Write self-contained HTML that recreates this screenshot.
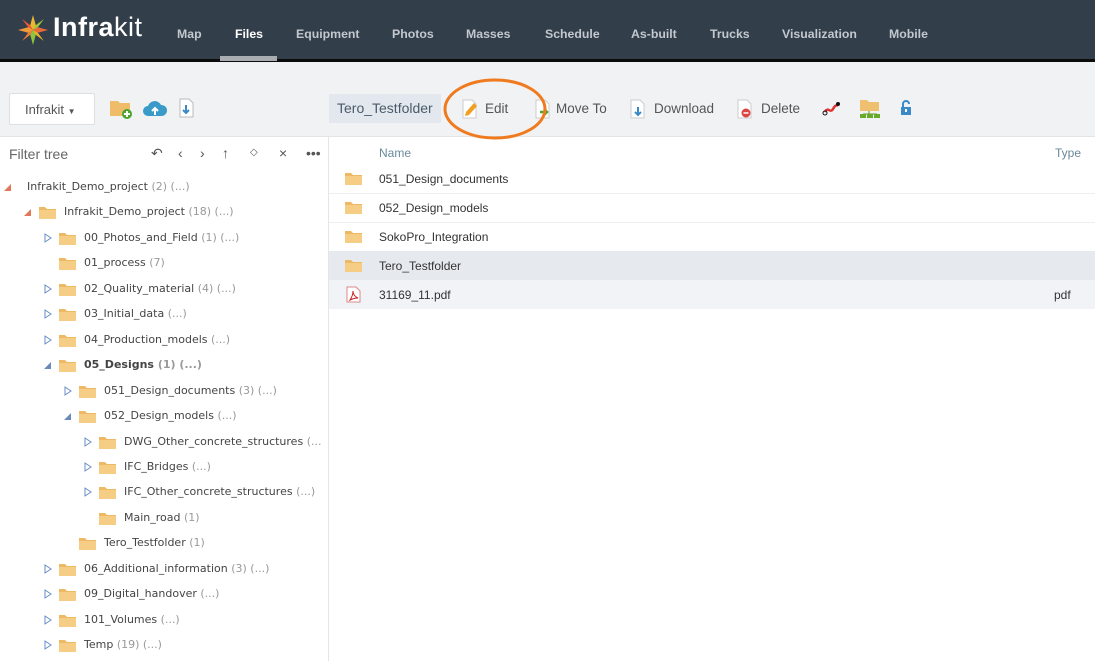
<!DOCTYPE html>
<html><head><meta charset="utf-8"><style>
*{margin:0;padding:0;box-sizing:border-box}
body{width:1095px;height:661px;overflow:hidden;background:#fff;font-family:"Liberation Sans",sans-serif;position:relative}
.hdr{position:absolute;left:0;top:0;width:1095px;height:59px;background:#323e4a}
.blk{position:absolute;left:0;top:59px;width:1095px;height:3px;background:#0c0c0c}
.nav{position:absolute;top:27px;color:#c3c8ce;font-weight:bold;font-size:12.3px}
.tb{position:absolute;left:0;top:62px;width:1095px;height:75px;background:#f1f2f4;border-bottom:1px solid #e2e4e7}
.a{position:absolute}
.tl{position:absolute;font-family:"DejaVu Sans",sans-serif;font-size:11px;color:#444;white-space:nowrap}
.tl span{color:#999}
.fl{position:absolute;font-size:12px;color:#333}
.tbt{position:absolute;font-size:13.5px;color:#555;top:101px}
</style></head><body>
<div class="hdr"></div><div class="blk"></div>
<div class="a" style="left:220px;top:56px;width:57px;height:5px;background:#a9adb2"></div>
<svg class="a" style="left:17px;top:14px" width="32" height="32" viewBox="0 0 32 32">
<polygon points="16,1 19,12 16,16 13,12" fill="#e8b830"/><polygon points="31,16 20,19 16,16 20,13" fill="#e86a3a"/>
<polygon points="16,31 13,20 16,16 19,20" fill="#8cc43c"/><polygon points="1,16 12,13 16,16 12,19" fill="#f29a3a"/>
<polygon points="5,5 13,11 16,16 11,13" fill="#e85a3a"/><polygon points="27,5 21,13 16,16 19,11" fill="#9cc83c"/>
<polygon points="27,27 19,21 16,16 21,19" fill="#e8b030"/><polygon points="5,27 11,19 16,16 13,21" fill="#e87a3a"/></svg>
<div class="a" style="left:53px;top:12px;color:#fff;font-size:27px;font-weight:bold;letter-spacing:0.5px">Infra<span style="font-weight:normal">kit</span></div>
<div class="nav" style="left:177px">Map</div>
<div class="nav" style="left:235px;color:#fff">Files</div>
<div class="nav" style="left:296px">Equipment</div>
<div class="nav" style="left:392px">Photos</div>
<div class="nav" style="left:466px">Masses</div>
<div class="nav" style="left:545px">Schedule</div>
<div class="nav" style="left:631px">As-built</div>
<div class="nav" style="left:710px">Trucks</div>
<div class="nav" style="left:782px">Visualization</div>
<div class="nav" style="left:889px">Mobile</div>
<div class="tb"></div>
<div class="a" style="left:9px;top:93px;width:86px;height:32px;background:#fff;border:1px solid #dcdfe3;border-radius:2px;font-size:13px;color:#555;padding:8px 0 0 15px">Infrakit <span style="font-size:8px">▼</span></div>
<svg class="a" style="left:109px;top:98px" width="24" height="22"><path d="M1 3h8l2 2h10v13H1z" fill="#efbd6a"/><circle cx="18" cy="16" r="5" fill="#4aa52e"/><path d="M18 13v6M15 16h6" stroke="#fff" stroke-width="2"/></svg>
<svg class="a" style="left:143px;top:99px" width="24" height="18"><path d="M5 17a5 5 0 0 1 0-10a7 7 0 0 1 13-1a5 5 0 0 1 1 11z" fill="#3a9ac8"/><path d="M12 16v-6M9 12l3-3 3 3" stroke="#fff" stroke-width="2" fill="none"/></svg>
<svg class="a" style="left:179px;top:98px" width="16" height="20"><path d="M1 1h9l4 4v14H1z" fill="#fff" stroke="#bbb"/><path d="M7 7v8M4 12l3 3 3-3" stroke="#3a8ac8" stroke-width="2" fill="none"/></svg>
<div class="a" style="left:329px;top:94px;width:112px;height:29px;background:#e3e8ee;font-size:14px;color:#4a5a6a;padding:6px 0 0 8px">Tero_Testfolder</div>
<svg class="a" style="left:462px;top:99px" width="16" height="20"><path d="M1 1h9l4 4v14H1z" fill="#fff" stroke="#ccc"/><path d="M3 17l1-4 8-9 3 3-8 9z" fill="#f0a020"/></svg>
<div class="tbt" style="left:485px">Edit</div>
<svg class="a" style="left:535px;top:99px" width="16" height="20"><path d="M1 1h9l4 4v14H1z" fill="#fff" stroke="#ccc"/><path d="M5 13h6M9 10l3 3-3 3" stroke="#4aa52e" stroke-width="2.5" fill="none"/></svg>
<div class="tbt" style="left:556px">Move To</div>
<svg class="a" style="left:630px;top:99px" width="16" height="20"><path d="M1 1h9l4 4v14H1z" fill="#fff" stroke="#ccc"/><path d="M8 8v8M5 13l3 3 3-3" stroke="#3a8ac8" stroke-width="2" fill="none"/></svg>
<div class="tbt" style="left:654px">Download</div>
<svg class="a" style="left:737px;top:99px" width="16" height="20"><path d="M1 1h9l4 4v14H1z" fill="#fff" stroke="#ccc"/><circle cx="9" cy="14" r="4.5" fill="#d44"/><path d="M6.5 14h5" stroke="#fff" stroke-width="1.5"/></svg>
<div class="tbt" style="left:761px">Delete</div>
<svg class="a" style="left:822px;top:100px" width="20" height="16"><path d="M3 12c3-6 5 2 8-3s3-3 5-4" stroke="#d33" stroke-width="2.5" fill="none"/><circle cx="3" cy="13" r="2" fill="none" stroke="#111"/><circle cx="16" cy="4" r="2" fill="#111"/></svg>
<svg class="a" style="left:859px;top:99px" width="22" height="20"><path d="M1 1h7l2 2h10v9H1z" fill="#efc070"/><path d="M10 12v3M4 15h14" stroke="#5a9a2a"/><rect x="1" y="15" width="6" height="4" fill="#6aaa2a"/><rect x="8" y="15" width="6" height="4" fill="#6aaa2a"/><rect x="15" y="15" width="6" height="4" fill="#6aaa2a"/></svg>
<svg class="a" style="left:900px;top:99px" width="12" height="17"><path d="M3 8V5a3 3 0 0 1 6 0" stroke="#3a8ac8" stroke-width="2" fill="none"/><rect x="1" y="8" width="10" height="8" fill="#3a8ac8"/><rect x="5" y="10" width="2" height="3" fill="#fff"/></svg>
<svg class="a" style="left:440px;top:76px" width="110" height="66"><ellipse cx="55" cy="33" rx="50" ry="29" fill="none" stroke="#f07a1e" stroke-width="3"/></svg>
<div class="a" style="left:328px;top:137px;width:1px;height:524px;background:#e3e5e8"></div>
<div class="a" style="left:9px;top:146px;font-size:14px;color:#666">Filter tree</div>
<div class="a" style="left:151px;top:145px;font-size:14px;color:#555;letter-spacing:0">
<span style="position:absolute;left:0">↶</span><span style="position:absolute;left:27px">‹</span><span style="position:absolute;left:49px">›</span><span style="position:absolute;left:71px">↑</span><span style="position:absolute;left:99px;font-size:10px;top:2px">◇</span><span style="position:absolute;left:128px">×</span><span style="position:absolute;left:155px">•••</span></div>
<svg width="0" height="0" style="position:absolute"><defs>
<symbol id="f" viewBox="0 0 17 13"><path d="M0 1h6l2 2h9v10H0z" fill="#edb964"/><path d="M0 4h17v9H0z" fill="#f6cd85"/></symbol>
<symbol id="o" viewBox="0 0 8 10"><path d="M1 1l6 4-6 4z" fill="none" stroke="#6a8ec8"/></symbol>
<symbol id="c" viewBox="0 0 8 8"><path d="M7 1v7H0z" fill="#6a8ab8"/></symbol>
<symbol id="r" viewBox="0 0 8 8"><path d="M7 1v7H0z" fill="#e0785a"/></symbol>
</defs></svg>
<svg class="a" style="left:4px;top:183px" width="8" height="8"><use href="#r"/></svg>
<div class="tl" style="left:27px;top:180px">Infrakit_Demo_project <span>(2) (...)</span></div>
<svg class="a" style="left:24px;top:208px" width="8" height="8"><use href="#r"/></svg>
<svg class="a" style="left:39px;top:206px" width="17" height="13"><use href="#f"/></svg>
<div class="tl" style="left:64px;top:205px">Infrakit_Demo_project <span>(18) (...)</span></div>

<svg class="a" style="left:44px;top:233px" width="8" height="10"><use href="#o"/></svg>
<svg class="a" style="left:59px;top:232px" width="17" height="13"><use href="#f"/></svg>
<div class="tl" style="left:84px;top:231px">00_Photos_and_Field <span>(1) (...)</span></div>
<svg class="a" style="left:59px;top:257px" width="17" height="13"><use href="#f"/></svg>
<div class="tl" style="left:84px;top:256px">01_process <span>(7)</span></div>
<svg class="a" style="left:44px;top:284px" width="8" height="10"><use href="#o"/></svg>
<svg class="a" style="left:59px;top:283px" width="17" height="13"><use href="#f"/></svg>
<div class="tl" style="left:84px;top:282px">02_Quality_material <span>(4) (...)</span></div>
<svg class="a" style="left:44px;top:309px" width="8" height="10"><use href="#o"/></svg>
<svg class="a" style="left:59px;top:308px" width="17" height="13"><use href="#f"/></svg>
<div class="tl" style="left:84px;top:307px">03_Initial_data <span>(...)</span></div>
<svg class="a" style="left:44px;top:335px" width="8" height="10"><use href="#o"/></svg>
<svg class="a" style="left:59px;top:334px" width="17" height="13"><use href="#f"/></svg>
<div class="tl" style="left:84px;top:333px">04_Production_models <span>(...)</span></div>
<svg class="a" style="left:44px;top:361px" width="8" height="8"><use href="#c"/></svg>
<svg class="a" style="left:59px;top:359px" width="17" height="13"><use href="#f"/></svg>
<div class="tl" style="left:84px;top:358px;font-weight:bold">05_Designs <span>(1) (...)</span></div>

<svg class="a" style="left:64px;top:386px" width="8" height="10"><use href="#o"/></svg>
<svg class="a" style="left:79px;top:385px" width="17" height="13"><use href="#f"/></svg>
<div class="tl" style="left:104px;top:384px">051_Design_documents <span>(3) (...)</span></div>
<svg class="a" style="left:64px;top:412px" width="8" height="8"><use href="#c"/></svg>
<svg class="a" style="left:79px;top:410px" width="17" height="13"><use href="#f"/></svg>
<div class="tl" style="left:104px;top:409px">052_Design_models <span>(...)</span></div>

<svg class="a" style="left:84px;top:437px" width="8" height="10"><use href="#o"/></svg>
<svg class="a" style="left:99px;top:436px" width="17" height="13"><use href="#f"/></svg>
<div class="tl" style="left:124px;top:435px">DWG_Other_concrete_structures <span>(...</span></div>
<svg class="a" style="left:84px;top:462px" width="8" height="10"><use href="#o"/></svg>
<svg class="a" style="left:99px;top:461px" width="17" height="13"><use href="#f"/></svg>
<div class="tl" style="left:124px;top:460px">IFC_Bridges <span>(...)</span></div>
<svg class="a" style="left:84px;top:487px" width="8" height="10"><use href="#o"/></svg>
<svg class="a" style="left:99px;top:486px" width="17" height="13"><use href="#f"/></svg>
<div class="tl" style="left:124px;top:485px">IFC_Other_concrete_structures <span>(...)</span></div>
<svg class="a" style="left:99px;top:512px" width="17" height="13"><use href="#f"/></svg>
<div class="tl" style="left:124px;top:511px">Main_road <span>(1)</span></div>
<svg class="a" style="left:79px;top:537px" width="17" height="13"><use href="#f"/></svg>
<div class="tl" style="left:104px;top:536px">Tero_Testfolder <span>(1)</span></div>

<svg class="a" style="left:44px;top:564px" width="8" height="10"><use href="#o"/></svg>
<svg class="a" style="left:59px;top:563px" width="17" height="13"><use href="#f"/></svg>
<div class="tl" style="left:84px;top:562px">06_Additional_information <span>(3) (...)</span></div>
<svg class="a" style="left:44px;top:589px" width="8" height="10"><use href="#o"/></svg>
<svg class="a" style="left:59px;top:588px" width="17" height="13"><use href="#f"/></svg>
<div class="tl" style="left:84px;top:587px">09_Digital_handover <span>(...)</span></div>
<svg class="a" style="left:44px;top:615px" width="8" height="10"><use href="#o"/></svg>
<svg class="a" style="left:59px;top:614px" width="17" height="13"><use href="#f"/></svg>
<div class="tl" style="left:84px;top:613px">101_Volumes <span>(...)</span></div>
<svg class="a" style="left:44px;top:640px" width="8" height="10"><use href="#o"/></svg>
<svg class="a" style="left:59px;top:639px" width="17" height="13"><use href="#f"/></svg>
<div class="tl" style="left:84px;top:638px">Temp <span>(19) (...)</span></div>

<div class="a" style="left:379px;top:146px;font-size:12px;color:#6a8a9a">Name</div>
<div class="a" style="left:1055px;top:146px;font-size:12px;color:#6a8a9a">Type</div>
<div class="a" style="left:329px;top:193px;width:766px;height:1px;background:#eceef0"></div>
<div class="a" style="left:329px;top:222px;width:766px;height:1px;background:#eceef0"></div>
<div class="a" style="left:329px;top:251px;width:766px;height:29px;background:#e6eaef"></div>
<div class="a" style="left:329px;top:280px;width:766px;height:29px;background:#f1f3f6"></div>
<svg class="a" style="left:345px;top:172px" width="17" height="13"><use href="#f"/></svg>
<div class="fl" style="left:379px;top:172px">051_Design_documents</div>
<svg class="a" style="left:345px;top:201px" width="17" height="13"><use href="#f"/></svg>
<div class="fl" style="left:379px;top:201px">052_Design_models</div>
<svg class="a" style="left:345px;top:230px" width="17" height="13"><use href="#f"/></svg>
<div class="fl" style="left:379px;top:230px">SokoPro_Integration</div>
<svg class="a" style="left:345px;top:259px" width="17" height="13"><use href="#f"/></svg>
<div class="fl" style="left:379px;top:259px">Tero_Testfolder</div>
<svg class="a" style="left:346px;top:286px" width="15" height="17"><path d="M1 1h9l4 4v11H1z" fill="#fff" stroke="#d88"/><path d="M4 14c2-3 3-6 3-9c0 3 2 6 5 7c-3 0-6 1-8 2z" fill="none" stroke="#c22"/></svg>
<div class="fl" style="left:379px;top:288px">31169_11.pdf</div>
<div class="fl" style="left:1054px;top:288px">pdf</div>
</body></html>
